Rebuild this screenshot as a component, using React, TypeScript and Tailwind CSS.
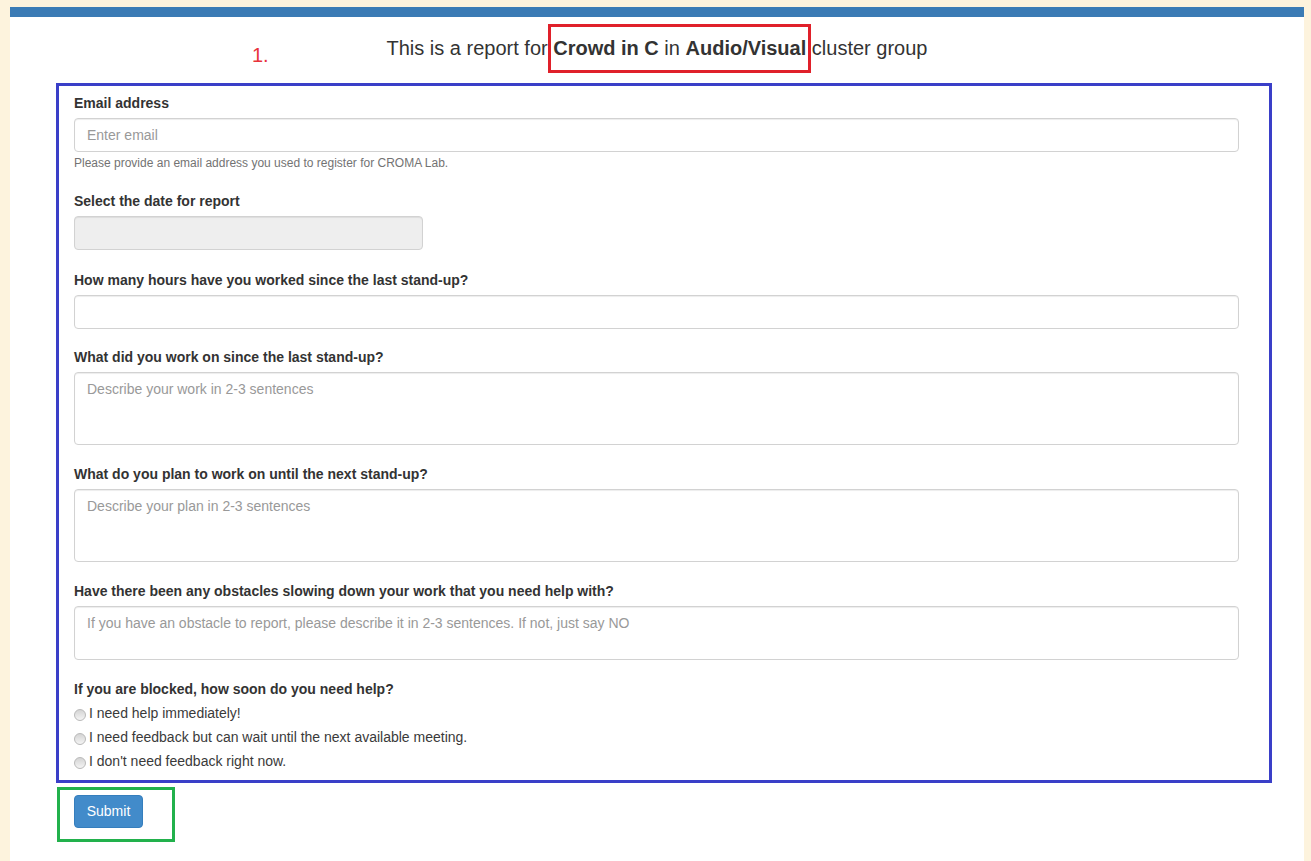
import React from "react";

const Label = ({ children }: { children: React.ReactNode }) => (
  <label className="block text-[14px] leading-[20px] font-bold text-[#333] mb-[5px]">{children}</label>
);

const fieldClass =
  "block rounded-[4px] border border-[#d2d2d2] px-[12px] py-[6px] text-[14px] leading-[20px] text-[#555] placeholder:text-[#999] shadow-[inset_0_1px_1px_rgba(0,0,0,0.075)] outline-none";

const Radio = ({ text }: { text: string }) => (
  <div className="flex items-center h-[24px]">
    <span className="w-[12px] h-[12px] mt-[3px] rounded-full border border-[#b9b9b9] bg-gradient-to-b from-[#d4d4d4] to-[#f4f4f4] mr-[3px]" />
    <span className="text-[14px] leading-[20px] text-[#3a3a3a]">{text}</span>
  </div>
);

export default function App() {
  return (
    <div className="min-h-[861px] bg-[#fdf3dd] pt-[7px] pl-[10px] pr-[7px] font-['Liberation_Sans',Arial,sans-serif]">
      <div className="min-h-[854px] bg-white">
        {/* top bar */}
        <div className="h-[10px] bg-[#3b7bb5]" />

        {/* heading */}
        <div className="relative h-[66px] flex items-center justify-center">
          <span className="absolute left-[242px] top-[26px] text-[20px] leading-[24px] text-[#e8333b]">1.</span>
          <h1 className="text-[20px] leading-[24px] text-[#333] -mt-[5px]">
            This is a report for{" "}
            <span className="relative">
              <b>Crowd in C</b> in <b>Audio/Visual</b>
              <span className="absolute -left-[5px] -right-[5px] -top-[13px] -bottom-[14px] border-[3px] border-[#e0202a]" />
            </span>{" "}
            cluster group
          </h1>
        </div>

        {/* form */}
        <div className="ml-[46px] mr-[32px] border-[3px] border-[#3a3fc8] pl-[15px] pr-[30px] pt-[7px] pb-[7px]">
          <div className="mb-[19px]">
            <Label>Email address</Label>
            <input className={fieldClass + " w-full h-[34px] bg-white"} placeholder="Enter email" />
            <p className="mt-[3px] text-[12px] leading-[17px] text-[#737373]">
              Please provide an email address you used to register for CROMA Lab.
            </p>
          </div>

          <div className="mb-[20px]">
            <Label>Select the date for report</Label>
            <input className={fieldClass + " w-[349px] h-[34px] bg-[#eeeeee]"} disabled />
          </div>

          <div className="mb-[18px]">
            <Label>How many hours have you worked since the last stand-up?</Label>
            <input className={fieldClass + " w-full h-[34px] bg-white"} />
          </div>

          <div className="mb-[19px]">
            <Label>What did you work on since the last stand-up?</Label>
            <textarea className={fieldClass + " w-full h-[73px] bg-white resize-none"} placeholder="Describe your work in 2-3 sentences" />
          </div>

          <div className="mb-[19px]">
            <Label>What do you plan to work on until the next stand-up?</Label>
            <textarea className={fieldClass + " w-full h-[73px] bg-white resize-none"} placeholder="Describe your plan in 2-3 sentences" />
          </div>

          <div className="mb-[19px]">
            <Label>Have there been any obstacles slowing down your work that you need help with?</Label>
            <textarea
              className={fieldClass + " w-full h-[54px] bg-white resize-none"}
              placeholder="If you have an obstacle to report, please describe it in 2-3 sentences. If not, just say NO"
            />
          </div>

          <div>
            <Label>If you are blocked, how soon do you need help?</Label>
            <div className="-mt-[3px]">
              <Radio text="I need help immediately!" />
              <Radio text="I need feedback but can wait until the next available meeting." />
              <Radio text="I don't need feedback right now." />
            </div>
          </div>
        </div>

        {/* submit */}
        <div className="ml-[47px] mt-[4px] inline-block border-[3px] border-[#22b14c] pl-[14px] pr-[29px] pt-[5px] pb-[11px]">
          <button className="h-[33px] w-[69px] rounded-[4px] border border-[#357ebd] bg-[#428bca] text-[14px] text-white">
            Submit
          </button>
        </div>
      </div>
    </div>
  );
}
